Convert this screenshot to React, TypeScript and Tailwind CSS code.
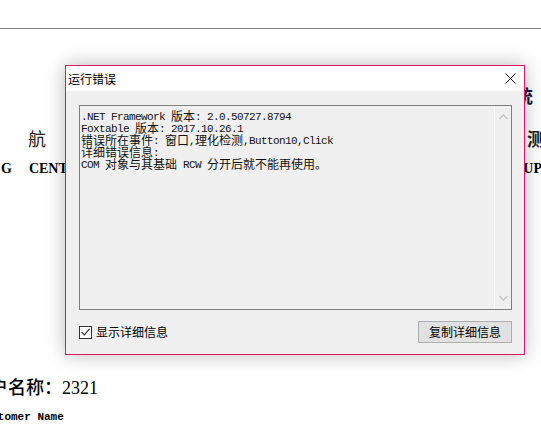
import React from 'react';

const lines = [
  '.NET Framework 版本: 2.0.50727.8794',
  'Foxtable 版本: 2017.10.26.1',
  '错误所在事件: 窗口,理化检测,Button10,Click',
  '详细错误信息:',
  'COM 对象与其基础 RCW 分开后就不能再使用。',
];

const cjk = /[\u3000-\u9fff\uff00-\uffef]/;

// ascii gets a 6px advance, cjk 12px, like SimSun half/full width
function MixedLine({ text }: { text: string }) {
  const parts = text.split(/([\u3000-\u9fff\uff00-\uffef]+)/).filter(Boolean);
  return (
    <div className="flex h-[12px] items-start whitespace-pre">
      {parts.map((p, i) =>
        cjk.test(p) ? (
          <span key={i} className="h-[12px] font-['Noto_Sans_CJK_SC',sans-serif] text-[12px] leading-[12px]">
            {p}
          </span>
        ) : (
          <span key={i} className="mt-[2px] h-[10px] font-['Liberation_Mono',monospace] text-[11px] leading-[10px] tracking-[-0.6px]">
            {p}
          </span>
        )
      )}
    </div>
  );
}

function ErrorDialog() {
  return (
    <div className="absolute left-[65px] top-[65px] flex h-[290px] w-[460px] flex-col border border-[#e0195c] bg-[#f0f0f0] shadow-[0_0_18px_rgba(0,0,0,0.28)] font-['Noto_Sans_CJK_SC',sans-serif] text-black">
      {/* title bar */}
      <div className="flex h-[25px] items-center justify-between bg-white pl-[2px]">
        <span className="text-[12px] leading-none">运行错误</span>
        <div className="flex h-[25px] w-[28px] items-center justify-center">
          <svg width="11" height="11" viewBox="0 0 11 11">
            <path d="M0.5 0.5 L10.5 10.5 M10.5 0.5 L0.5 10.5" stroke="#111" strokeWidth="1" />
          </svg>
        </div>
      </div>

      {/* body */}
      <div className="flex flex-1 flex-col pl-[13px] pr-[12px] pt-[14px]">
        <div className="flex h-[205px] border border-[#7f7f7f] bg-[#f0f0f0]">
          <div className="flex-1 pl-[1px] pt-[4px] text-[#111]">
            {lines.map((l) => (
              <MixedLine key={l} text={l} />
            ))}
          </div>
          <div className="flex w-[17px] flex-col items-center justify-between border-l border-white py-[8px]">
            <svg width="9" height="6" viewBox="0 0 9 6">
              <path d="M0.5 5 L4.5 1 L8.5 5" fill="none" stroke="#c5c5c5" strokeWidth="1.5" />
            </svg>
            <svg width="9" height="6" viewBox="0 0 9 6">
              <path d="M0.5 1 L4.5 5 L8.5 1" fill="none" stroke="#c5c5c5" strokeWidth="1.5" />
            </svg>
          </div>
        </div>

        <div className="mt-[11px] flex h-[22px] items-center justify-between">
          <label className="flex items-center gap-[4px] text-[12px]">
            <span className="flex h-[13px] w-[13px] items-center justify-center border border-[#333] bg-white">
              <svg width="9" height="8" viewBox="0 0 9 8">
                <path d="M0.5 4 L3.3 6.8 L8.5 0.8" fill="none" stroke="#333" strokeWidth="1.2" />
              </svg>
            </span>
            <span className="leading-none">显示详细信息</span>
          </label>
          <button className="flex h-[22px] w-[94px] items-center justify-center border border-[#adadad] bg-[#e1e1e1] text-[12px] leading-none">
            复制详细信息
          </button>
        </div>
      </div>
    </div>
  );
}

export default function App() {
  return (
    <div className="relative h-[428px] w-[541px] overflow-hidden bg-white text-black">
      {/* page behind the dialog */}
      <div className="h-[29px] border-b border-[#858585]" />
      <div className="mt-[57px] flex h-[22px] items-center justify-end pr-[8px]">
        <span className="font-['Liberation_Serif','Noto_Sans_CJK_SC',serif] text-[18px] font-bold leading-none text-[#1a1a3a]">统</span>
      </div>
      <div className="mt-[19px] flex h-[22px] items-center">
        <span className="ml-[28px] font-['Noto_Sans_CJK_SC',sans-serif] text-[18px] leading-none text-[#222]">航</span>
        <div className="flex-1" />
        <span className="mr-[-4px] font-['Noto_Sans_CJK_SC',sans-serif] text-[18px] font-bold leading-none text-[#222]">测</span>
      </div>
      <div className="mt-[11px] flex h-[18px] items-center font-['Liberation_Serif',serif] text-[14px] font-bold leading-none">
        <span className="ml-[1px]">G</span>
        <span className="ml-[17px]">CENTER</span>
        <div className="flex-1" />
        <span className="mr-[-1px]">GROUP</span>
      </div>
      <div className="mt-[198px] flex h-[24px] items-center">
        <span className="ml-[-28px] whitespace-nowrap font-['Liberation_Serif','Noto_Sans_CJK_SC',serif] text-[18px] font-medium leading-none">
          客户名称：2321
        </span>
      </div>
      <div className="mt-[10px] flex h-[14px] items-center">
        <span className="ml-[-22px] whitespace-nowrap font-['Liberation_Mono',monospace] text-[11px] font-bold leading-none">
          Customer Name
        </span>
      </div>

      <ErrorDialog />
    </div>
  );
}
